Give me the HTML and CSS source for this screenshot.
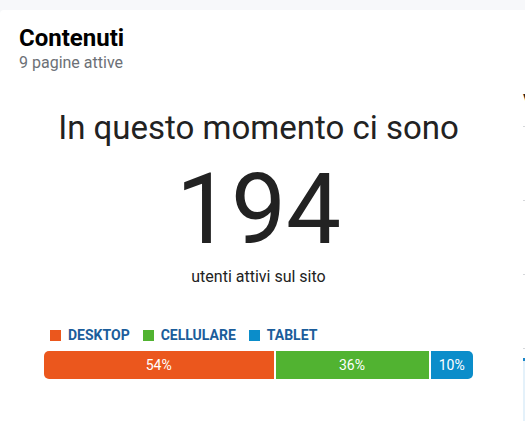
FILE: index.html
```html
<!DOCTYPE html>
<html lang="it">

<head>
    <meta charset="UTF-8">
    <meta name="viewport" content="width=device-width, initial-scale=1.0">
    <title>Contenuti</title>
    <link rel="stylesheet" href="styles.css">
</head>

<body>
    <div class="board">
        <div class="panel">
            <section class="contenuti">
                <h2 class="title">Contenuti</h2>
                <p class="subtitle">9 pagine attive</p>

                <div class="live">
                    <p class="live_intro">In questo momento ci sono</p>
                    <p class="live_count">194</p>
                    <p class="live_label">utenti attivi sul sito</p>
                </div>

                <div class="devices">
                    <ul class="legend">
                        <li><span class="dot desktop"></span>DESKTOP</li>
                        <li><span class="dot mobile"></span>CELLULARE</li>
                        <li><span class="dot tablet"></span>TABLET</li>
                    </ul>
                    <div class="bar">
                        <div class="seg desktop" style="flex-basis: 54%">54%</div>
                        <div class="seg mobile" style="flex-basis: 36%">36%</div>
                        <div class="seg tablet" style="flex-basis: 10%">10%</div>
                    </div>
                </div>
            </section>

            <section class="trend">
                <h3 class="trend_title">V</h3>
                <div class="grid_line"></div>
                <div class="grid_line"></div>
                <div class="grid_line"></div>
                <div class="grid_line"></div>
                <div class="trend_bar"></div>
            </section>
        </div>
    </div>
</body>

</html>
```

FILE: styles.css
```css
* {
    margin: 0;
    padding: 0;
    box-sizing: border-box;
}

body {
    background: #f7f8fa;
    font-family: Roboto, "Liberation Sans", sans-serif;
    overflow: hidden;
}

.board {
    padding-top: 10px;
    width: 525px;
    overflow: hidden;
}

.panel {
    background: #fff;
    border-radius: 4px 0 0 0;
    display: grid;
    grid-template-columns: 521px 60px;
    height: 420px;
}

/* left card */
.contenuti {
    padding: 14px 0 0 19px;
}

.title {
    font-size: 24px;
    font-weight: bold;
    line-height: 28px;
    color: #000;
}

.subtitle {
    font-size: 16px;
    line-height: 18px;
    color: #6c7076;
    margin-top: 2px;
}

.live {
    width: 479px;
    text-align: center;
    color: #222;
    margin-top: 36px;
}

.live_intro {
    font-size: 33px;
    line-height: 40px;
}

.live_count {
    font-size: 98px;
    line-height: 110px;
    margin-top: 7px;
}

.live_label {
    font-size: 16px;
    line-height: 20px;
    margin-top: 2px;
}

.devices {
    margin: 40px 0 0 25px;
    width: 429px;
}

.legend {
    list-style: none;
    display: flex;
    gap: 13px;
    padding-left: 6px;
    margin-bottom: 8px;
}

.legend li {
    display: flex;
    align-items: center;
    font-size: 14px;
    font-weight: bold;
    color: #1b5d9b;
    line-height: 16px;
}

.dot {
    width: 11px;
    height: 11px;
    margin-right: 7px;
}

.desktop {
    background: #eb571d;
}

.mobile {
    background: #51b331;
}

.tablet {
    background: #0b8dca;
}

.bar {
    display: flex;
    gap: 2px;
    height: 28px;
    border-radius: 5px;
    overflow: hidden;
}

.seg {
    color: #fff;
    font-size: 14px;
    display: flex;
    align-items: center;
    justify-content: center;
    flex-shrink: 1;
}

/* sliver of the next chart */
.trend {
    padding: 82px 0 0 2px;
}

.trend_title {
    font-size: 16px;
    font-weight: 500;
    color: #222;
    line-height: 18px;
    margin-bottom: 16px;
}

.grid_line {
    height: 1px;
    background: #d5d7da;
    width: 6px;
    margin-bottom: 73px;
}

.grid_line:nth-child(5) {
    margin-bottom: 9px;
}

.trend_bar {
    height: 63px;
    background: #e4f1fa;
    border-top: 3px solid #1a86c8;
}
```
